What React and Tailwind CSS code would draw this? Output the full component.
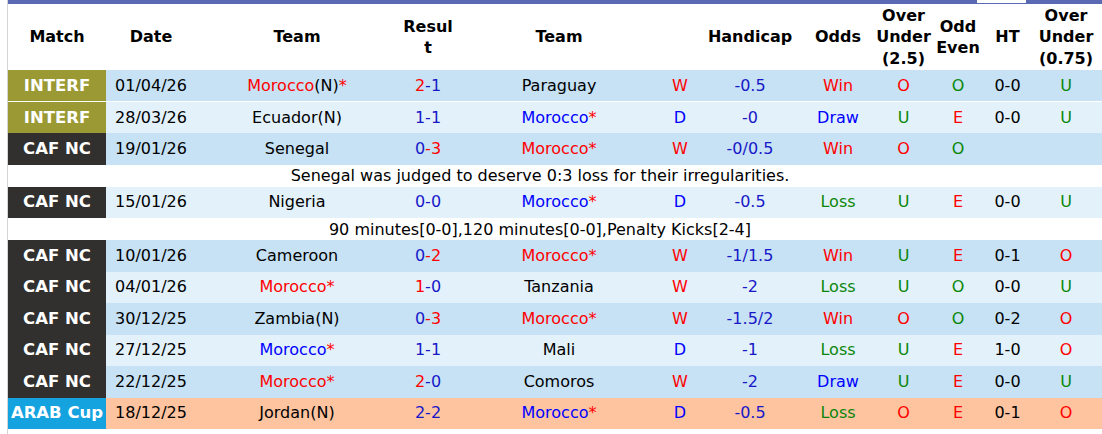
const RED = 'text-[#ff0000]'
const BLUE = 'text-[#0000ff]'
const NAVY = 'text-[#1818c8]'
const GREEN = 'text-[#0a870a]'
const BLACK = 'text-black'

const COMP = {
  INTERF: 'bg-[#9a9934]',
  'CAF NC': 'bg-[#32302e]',
  'ARAB Cup': 'bg-[#14a3df]',
}

const rows = [
  { comp: 'INTERF', date: '01/04/26', home: { name: 'Morocco', c: RED, tag: '(N)', star: true }, s: ['2', RED, '-1', NAVY], away: { name: 'Paraguay', c: BLACK }, wl: ['W', RED], hc: '-0.5', odds: ['Win', RED], ou: ['O', RED], oe: ['O', GREEN], ht: '0-0', ou75: ['U', GREEN] },
  { comp: 'INTERF', date: '28/03/26', home: { name: 'Ecuador', c: BLACK, tag: '(N)' }, s: ['1', NAVY, '-1', NAVY], away: { name: 'Morocco', c: BLUE, star: true }, wl: ['D', BLUE], hc: '-0', odds: ['Draw', BLUE], ou: ['U', GREEN], oe: ['E', RED], ht: '0-0', ou75: ['U', GREEN] },
  { comp: 'CAF NC', date: '19/01/26', home: { name: 'Senegal', c: BLACK }, s: ['0', NAVY, '-3', RED], away: { name: 'Morocco', c: RED, star: true }, wl: ['W', RED], hc: '-0/0.5', odds: ['Win', RED], ou: ['O', RED], oe: ['O', GREEN], ht: '', ou75: ['', BLACK], note: 'Senegal was judged to deserve 0:3 loss for their irregularities.' },
  { comp: 'CAF NC', date: '15/01/26', home: { name: 'Nigeria', c: BLACK }, s: ['0', NAVY, '-0', NAVY], away: { name: 'Morocco', c: BLUE, star: true }, wl: ['D', BLUE], hc: '-0.5', odds: ['Loss', GREEN], ou: ['U', GREEN], oe: ['E', RED], ht: '0-0', ou75: ['U', GREEN], note: '90 minutes[0-0],120 minutes[0-0],Penalty Kicks[2-4]' },
  { comp: 'CAF NC', date: '10/01/26', home: { name: 'Cameroon', c: BLACK }, s: ['0', NAVY, '-2', RED], away: { name: 'Morocco', c: RED, star: true }, wl: ['W', RED], hc: '-1/1.5', odds: ['Win', RED], ou: ['U', GREEN], oe: ['E', RED], ht: '0-1', ou75: ['O', RED] },
  { comp: 'CAF NC', date: '04/01/26', home: { name: 'Morocco', c: RED, star: true }, s: ['1', RED, '-0', NAVY], away: { name: 'Tanzania', c: BLACK }, wl: ['W', RED], hc: '-2', odds: ['Loss', GREEN], ou: ['U', GREEN], oe: ['O', GREEN], ht: '0-0', ou75: ['U', GREEN] },
  { comp: 'CAF NC', date: '30/12/25', home: { name: 'Zambia', c: BLACK, tag: '(N)' }, s: ['0', NAVY, '-3', RED], away: { name: 'Morocco', c: RED, star: true }, wl: ['W', RED], hc: '-1.5/2', odds: ['Win', RED], ou: ['O', RED], oe: ['O', GREEN], ht: '0-2', ou75: ['O', RED] },
  { comp: 'CAF NC', date: '27/12/25', home: { name: 'Morocco', c: BLUE, star: true }, s: ['1', NAVY, '-1', NAVY], away: { name: 'Mali', c: BLACK }, wl: ['D', BLUE], hc: '-1', odds: ['Loss', GREEN], ou: ['U', GREEN], oe: ['E', RED], ht: '1-0', ou75: ['O', RED] },
  { comp: 'CAF NC', date: '22/12/25', home: { name: 'Morocco', c: RED, star: true }, s: ['2', RED, '-0', NAVY], away: { name: 'Comoros', c: BLACK }, wl: ['W', RED], hc: '-2', odds: ['Draw', BLUE], ou: ['U', GREEN], oe: ['E', RED], ht: '0-0', ou75: ['U', GREEN] },
  { comp: 'ARAB Cup', date: '18/12/25', home: { name: 'Jordan', c: BLACK, tag: '(N)' }, s: ['2', NAVY, '-2', NAVY], away: { name: 'Morocco', c: BLUE, star: true }, wl: ['D', BLUE], hc: '-0.5', odds: ['Loss', GREEN], ou: ['O', RED], oe: ['E', RED], ht: '0-1', ou75: ['O', RED], peach: true },
]

function TeamName({ t }) {
  return (
    <span className={t.c}>
      {t.name}
      {t.tag && <span className="text-black">{t.tag}</span>}
      {t.star && <span className="text-[#ff0000]">*</span>}
    </span>
  )
}

export default function App() {
  return (
    <div className="pl-[7px] bg-white" style={{ fontFamily: '"DejaVu Sans", Verdana, sans-serif' }}>
      <div className="h-[434px] overflow-hidden border-l border-[#d4d4d4]">
        {/* top bar */}
        <div className="flex h-[4px] bg-[#5a69b4]">
          <div className="ml-[969px] w-[49px] h-[3px] bg-white" />
        </div>

        <table className="w-[1094px] table-fixed border-collapse text-[16px] leading-[20px] text-center [&_td]:p-0">
          <colgroup>
            <col className="w-[98px]" />
            <col className="w-[90px]" />
            <col className="w-[202px]" />
            <col className="w-[60px]" />
            <col className="w-[202px]" />
            <col className="w-[40px]" />
            <col className="w-[100px]" />
            <col className="w-[76px]" />
            <col className="w-[55px]" />
            <col className="w-[54px]" />
            <col className="w-[45px]" />
            <col className="w-[72px]" />
          </colgroup>
          <thead>
            <tr className="h-[66px] font-bold text-black leading-[21.5px]">
              <th>Match</th>
              <th>Date</th>
              <th>Team</th>
              <th className="px-1 break-all">Result</th>
              <th>Team</th>
              <th></th>
              <th>Handicap</th>
              <th>Odds</th>
              <th className="px-0">Over<br />Under<br />(2.5)</th>
              <th className="px-0">Odd<br />Even</th>
              <th>HT</th>
              <th className="px-0">Over<br />Under<br />(0.75)</th>
            </tr>
          </thead>
          <tbody>
            {rows.map((r, i) => {
              const bg = r.peach ? 'bg-[#fdc49f]' : i % 2 === 0 ? 'bg-[#c6e2f4]' : 'bg-[#e3f1fa]'
              return [
                <tr key={r.date} className={`h-[31.5px] ${bg} ${i === 0 ? 'border-b border-white' : ''}`}>
                  <td className={`${COMP[r.comp]} text-white font-bold text-[16.5px] whitespace-nowrap`}>{r.comp}</td>
                  <td className="text-black">{r.date}</td>
                  <td><TeamName t={r.home} /></td>
                  <td><span className={r.s[1]}>{r.s[0]}</span><span className={r.s[3]}>{r.s[2]}</span></td>
                  <td><TeamName t={r.away} /></td>
                  <td className={r.wl[1]}>{r.wl[0]}</td>
                  <td className={NAVY}>{r.hc}</td>
                  <td className={r.odds[1]}>{r.odds[0]}</td>
                  <td className={r.ou[1]}>{r.ou[0]}</td>
                  <td className={r.oe[1]}>{r.oe[0]}</td>
                  <td className="text-black">{r.ht}</td>
                  <td className={r.ou75[1]}>{r.ou75[0]}</td>
                </tr>,
                r.note && (
                  <tr key={r.date + 'n'} className="h-[22px] bg-white">
                    <td colSpan={12} className="text-black whitespace-nowrap">
                      <div className="pr-[30px] pt-[1px]">{r.note}</div>
                    </td>
                  </tr>
                ),
              ]
            })}
          </tbody>
        </table>
      </div>
    </div>
  )
}
